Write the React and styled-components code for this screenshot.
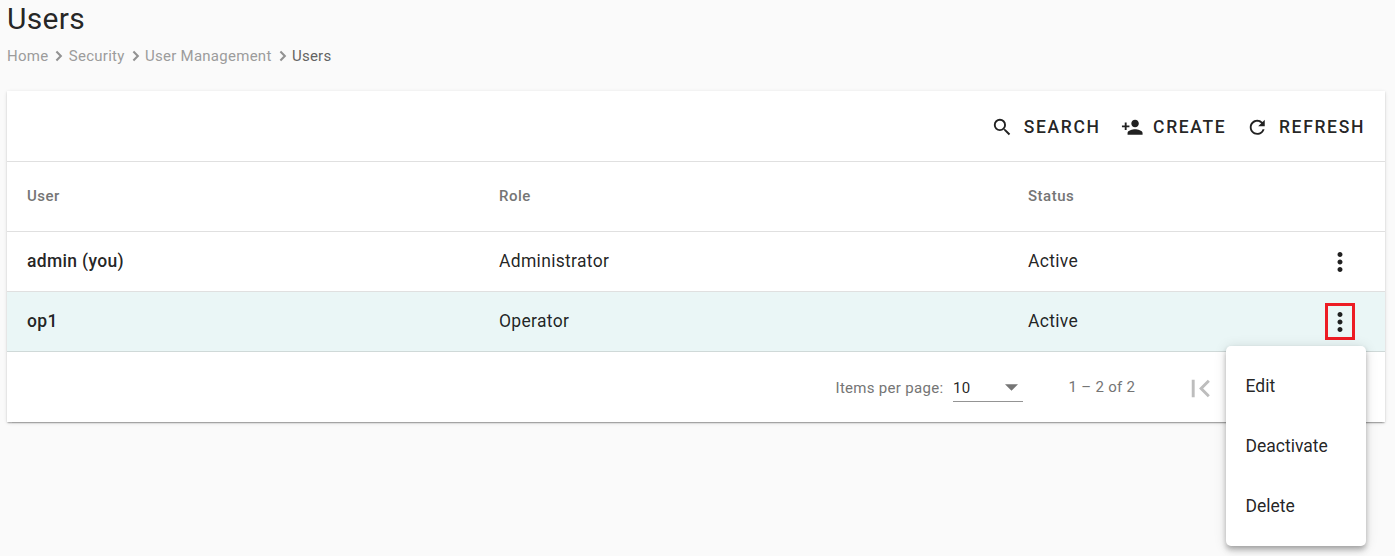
import React from 'react';
import styled, { createGlobalStyle } from 'styled-components';
import { MdSearch, MdPersonAdd, MdRefresh, MdMoreVert, MdFirstPage } from 'react-icons/md';

const GlobalStyle = createGlobalStyle`
  * { box-sizing: border-box; }
  body {
    margin: 0;
    background: #fafafa;
    color: rgba(0, 0, 0, 0.87);
    font-family: Roboto, "Liberation Sans", sans-serif;
    overflow: hidden;
  }
  svg { display: block; flex: none; }
`;

const Page = styled.main`
  height: 556px;
  padding: 0 10px 0 7px;
`;

const Title = styled.h1`
  margin: 0;
  padding-top: 1px;
  font-size: 30px;
  line-height: 36px;
  font-weight: 400;
  letter-spacing: 0.3px;
`;

const Breadcrumbs = styled.nav`
  display: flex;
  align-items: center;
  height: 20px;
  margin: 9px 0 25px;
  font-size: 15px;
  letter-spacing: 0.27px;
  color: #9c9c9c;
`;

const Crumb = styled.span`
  color: ${(p) => (p.$current ? '#636363' : 'inherit')};
`;

const Chevron = styled.svg`
  width: 20px;
  height: 20px;
  margin-right: 0.3px;
  fill: none;
  stroke: #929292;
  stroke-width: 2.5px;
`;

const Card = styled.section`
  background: #fff;
  height: 331px;
  box-shadow: 0 2.5px 1.25px -1.25px rgba(0, 0, 0, 0.2), 0 1.25px 1.25px rgba(0, 0, 0, 0.14),
    0 1.25px 3.75px rgba(0, 0, 0, 0.12);
`;

const Toolbar = styled.div`
  display: flex;
  align-items: center;
  justify-content: flex-end;
  gap: 20px;
  height: 71px;
  padding: 2px 20px 0 0;
  border-bottom: 1px solid #e0e0e0;
`;

const ToolButton = styled.button`
  display: flex;
  align-items: center;
  gap: 10px;
  padding: 0;
  border: 0;
  background: none;
  color: rgba(0, 0, 0, 0.87);
  font: 500 17.5px/22px Roboto, "Liberation Sans", sans-serif;
  letter-spacing: 1.66px;
  svg { margin-top: 1px; }
`;

const Row = styled.div`
  display: grid;
  grid-template-columns: 472px 529px 1fr 30px;
  align-items: center;
  height: ${(p) => (p.$head ? '70px' : '60px')};
  padding: 0 30px 0 20px;
  border-bottom: 1px solid ${(p) => (p.$active ? '#cfd9d8' : '#e0e0e0')};
  background: ${(p) => (p.$active ? '#eaf6f6' : 'transparent')};
`;

const HeadCell = styled.span`
  margin-top: -2px;
  font-size: 15px;
  font-weight: 500;
  letter-spacing: 0.5px;
  color: #757575;
`;

const Cell = styled.span`
  margin-top: -2px;
  font-size: 17.5px;
  line-height: 24px;
  font-weight: ${(p) => (p.$strong ? 500 : 400)};
  letter-spacing: 0.32px;
`;

const MenuTrigger = styled.button`
  display: flex;
  align-items: flex-start;
  justify-content: center;
  width: 30px;
  height: 37px;
  padding: 1px 0 0;
  background: none;
  color: rgba(0, 0, 0, 0.87);
  border: 3px solid ${(p) => (p.$marked ? '#ed1c24' : 'transparent')};
`;

const Paginator = styled.footer`
  display: flex;
  align-items: center;
  height: 70px;
  padding-left: 828.5px;
  font-size: 15px;
  letter-spacing: 0.3px;
  color: #757575;
`;

const SizeLabel = styled.span`
  width: 117.5px;
  padding-top: 2px;
`;

const PageSize = styled.div`
  display: flex;
  align-items: center;
  justify-content: space-between;
  width: 70px;
  height: 30px;
  flex: none;
  padding: 2px 5px 0 0;
  border-bottom: 1px solid #949494;
  color: rgba(0, 0, 0, 0.87);
`;

const Caret = styled.span`
  width: 13px;
  height: 6.5px;
  background: #757575;
  clip-path: polygon(0 0, 100% 0, 50% 100%);
`;

const Range = styled.span`
  width: 114px;
  margin-left: 45.5px;
`;

const FirstPage = styled.span`
  color: #bdbdbd;
  padding-top: 2px;
`;

const Menu = styled.ul`
  position: absolute;
  left: 1226px;
  top: 346px;
  width: 140px;
  height: 200px;
  margin: 0;
  padding: 10px 0;
  list-style: none;
  background: #fff;
  border-radius: 5px;
  box-shadow: 0 2.5px 5px -1.25px rgba(0, 0, 0, 0.2), 0 5px 6.25px rgba(0, 0, 0, 0.14),
    0 1.25px 12.5px rgba(0, 0, 0, 0.12);
`;

const MenuItem = styled.li`
  height: 60px;
  padding-left: 19.5px;
  font-size: 17.5px;
  line-height: 60px;
`;

const users = [
  { name: 'admin (you)', role: 'Administrator', status: 'Active' },
  { name: 'op1', role: 'Operator', status: 'Active', active: true },
];

const path = ['Home', 'Security', 'User Management', 'Users'];

export default function App() {
  return (
    <Page>
      <GlobalStyle />
      <Title>Users</Title>
      <Breadcrumbs>
        {path.map((label, i) => (
          <React.Fragment key={label}>
            {i > 0 && (
              <Chevron viewBox="0 0 24 24">
                <path d="M10.1 6.7 15.4 12 10.1 17.3" />
              </Chevron>
            )}
            <Crumb $current={i === path.length - 1}>{label}</Crumb>
          </React.Fragment>
        ))}
      </Breadcrumbs>
      <Card>
        <Toolbar>
          <ToolButton><MdSearch size={22.5} />SEARCH</ToolButton>
          <ToolButton><MdPersonAdd size={22.5} />CREATE</ToolButton>
          <ToolButton><MdRefresh size={22.5} />REFRESH</ToolButton>
        </Toolbar>
        <Row $head>
          <HeadCell>User</HeadCell>
          <HeadCell>Role</HeadCell>
          <HeadCell>Status</HeadCell>
        </Row>
        {users.map((u) => (
          <Row key={u.name} $active={u.active}>
            <Cell $strong>{u.name}</Cell>
            <Cell>{u.role}</Cell>
            <Cell>{u.status}</Cell>
            <MenuTrigger $marked={u.active} aria-label="Actions"><MdMoreVert size={30} /></MenuTrigger>
          </Row>
        ))}
        <Paginator>
          <SizeLabel>Items per page:</SizeLabel>
          <PageSize>10<Caret /></PageSize>
          <Range>1 – 2 of 2</Range>
          <FirstPage><MdFirstPage size={35} /></FirstPage>
        </Paginator>
      </Card>
      <Menu>
        <MenuItem>Edit</MenuItem>
        <MenuItem>Deactivate</MenuItem>
        <MenuItem>Delete</MenuItem>
      </Menu>
    </Page>
  );
}
